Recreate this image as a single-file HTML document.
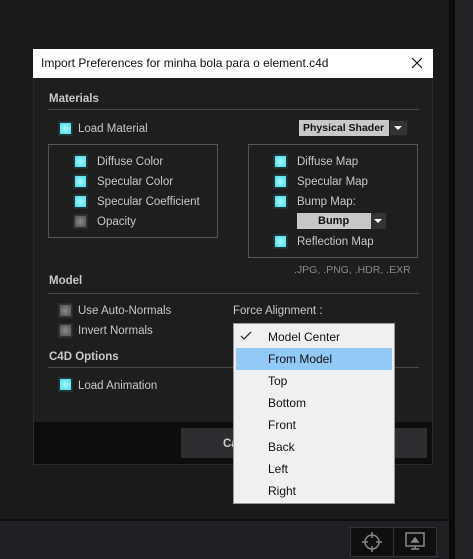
<!DOCTYPE html>
<html><head><style>
*{margin:0;padding:0;box-sizing:border-box}
body{width:473px;height:559px;background:#1a1a1b;position:relative;overflow:hidden;font-family:"Liberation Sans",sans-serif;font-size:11.5px;color:#c8c8c8}
.a{position:absolute}
.t{position:absolute;white-space:nowrap;line-height:14px}
.cb{position:absolute;width:13px;height:13px;border:1px solid #1a3c44;background:radial-gradient(#a6fbff,#48d8ec);box-shadow:0 0 0 1px #2b2b2b}
.cb.off{background:radial-gradient(#8a8a8a,#505050);border-color:#333}
.h{font-weight:bold;color:#c8c8c8;font-size:11.5px}
.ln{position:absolute;height:1px;background:#4a4a4a}
.mi{position:absolute;left:268px;color:#111;font-size:12px;line-height:14px}
</style></head><body>
<div class="a" style="left:449px;top:0;width:6px;height:559px;background:#0a0a0a"></div>
<div class="a" style="left:455px;top:0;width:18px;height:559px;background:#222326"></div>
<div class="a" style="left:0;top:519px;width:449px;height:40px;background:#1f2023;border-top:2px solid #0e0e0e"></div>
<div class="a" style="left:350px;top:527px;width:44px;height:30px;background:#0f0f10;border:1px solid #333"></div>
<div class="a" style="left:393px;top:527px;width:44px;height:30px;background:#0f0f10;border:1px solid #333"></div>
<svg class="a" style="left:360px;top:530px" width="24" height="24" viewBox="0 0 24 24" fill="none" stroke="#888" stroke-width="1.5"><circle cx="12" cy="12" r="7"/><path d="M12 2v6M12 16v6M2 12h6M16 12h6"/></svg>
<svg class="a" style="left:403px;top:531px" width="24" height="22" viewBox="0 0 24 22" fill="none" stroke="#888" stroke-width="1.5"><rect x="3" y="2" width="18" height="13"/><path d="M8 18h8M12 15v3"/><path d="M9 11l3-4 3 4z" fill="#888"/></svg>

<div class="a" style="left:33px;top:49px;width:400px;height:416px;background:#1e1e1f;border:1px solid #2a2a2a"></div>
<div class="a" style="left:33px;top:49px;width:400px;height:29px;background:#fff"></div>
<div class="t" style="left:41px;top:56px;color:#111;font-size:12px">Import Preferences for minha bola para o element.c4d</div>
<svg class="a" style="left:411px;top:57px" width="12" height="12" viewBox="0 0 12 12" stroke="#111" stroke-width="1.2"><path d="M1 1l10 10M11 1L1 11"/></svg>
<div class="a" style="left:34px;top:422px;width:398px;height:42px;background:#0c0d0d"></div>
<div class="a" style="left:181px;top:428px;width:246px;height:30px;background:#2c2d30"></div>
<div class="t" style="left:223px;top:437px;color:#ccc;font-weight:bold">Ca</div>

<div class="t h" style="left:49px;top:92px">Materials</div>
<div class="ln" style="left:48px;top:109px;width:371px"></div>
<div class="cb" style="left:59px;top:122px"></div><div class="t" style="left:78px;top:122px">Load Material</div>
<div class="a" style="left:299px;top:120px;width:109px;height:16px;background:#c8c8c8"></div>
<div class="t" style="left:303px;top:121px;color:#111;font-weight:bold;font-size:10.5px">Physical Shader</div>
<div class="a" style="left:389px;top:120px;width:19px;height:16px;background:#333;border:1px solid #222"></div>
<div class="a" style="left:394px;top:126px;border-left:4px solid transparent;border-right:4px solid transparent;border-top:4px solid #fff"></div>

<div class="a" style="left:48px;top:144px;width:170px;height:94px;border:1px solid #555"></div>
<div class="cb" style="left:74px;top:155px"></div><div class="t" style="left:97px;top:155px">Diffuse Color</div>
<div class="cb" style="left:74px;top:175px"></div><div class="t" style="left:97px;top:175px">Specular Color</div>
<div class="cb" style="left:74px;top:195px"></div><div class="t" style="left:97px;top:195px">Specular Coefficient</div>
<div class="cb off" style="left:74px;top:215px"></div><div class="t" style="left:97px;top:215px">Opacity</div>

<div class="a" style="left:248px;top:144px;width:170px;height:114px;border:1px solid #555"></div>
<div class="cb" style="left:274px;top:155px"></div><div class="t" style="left:297px;top:155px">Diffuse Map</div>
<div class="cb" style="left:274px;top:175px"></div><div class="t" style="left:297px;top:175px">Specular Map</div>
<div class="cb" style="left:274px;top:195px"></div><div class="t" style="left:297px;top:195px">Bump Map:</div>
<div class="a" style="left:297px;top:213px;width:89px;height:16px;background:#c8c8c8"></div>
<div class="t" style="left:318px;top:214px;color:#111;font-weight:bold;font-size:11px">Bump</div>
<div class="a" style="left:371px;top:213px;width:15px;height:16px;background:#333"></div>
<div class="a" style="left:374px;top:219px;border-left:4px solid transparent;border-right:4px solid transparent;border-top:4px solid #fff"></div>
<div class="cb" style="left:274px;top:235px"></div><div class="t" style="left:297px;top:235px">Reflection Map</div>
<div class="t" style="left:294px;top:263px;color:#888;font-size:10.5px">.JPG, .PNG, .HDR, .EXR</div>

<div class="t h" style="left:49px;top:274px">Model</div>
<div class="ln" style="left:48px;top:293px;width:371px"></div>
<div class="cb off" style="left:59px;top:304px"></div><div class="t" style="left:78px;top:304px">Use Auto-Normals</div>
<div class="cb off" style="left:59px;top:324px"></div><div class="t" style="left:78px;top:324px">Invert Normals</div>
<div class="t" style="left:233px;top:304px">Force Alignment :</div>
<div class="t h" style="left:49px;top:350px">C4D Options</div>
<div class="ln" style="left:48px;top:367px;width:371px"></div>
<div class="cb" style="left:59px;top:378px"></div><div class="t" style="left:78px;top:379px">Load Animation</div>

<div class="a" style="left:233px;top:323px;width:162px;height:181px;background:#f0f0f0;border:1px solid #999"></div>
<div class="a" style="left:236px;top:348px;width:156px;height:22px;background:#91c9f7"></div>
<svg class="a" style="left:240px;top:331px" width="12" height="10" viewBox="0 0 12 10" fill="none" stroke="#333" stroke-width="1.3"><path d="M1 5l3 3 7-7"/></svg>
<div class="mi" style="top:330px">Model Center</div>
<div class="mi" style="top:352px">From Model</div>
<div class="mi" style="top:374px">Top</div>
<div class="mi" style="top:396px">Bottom</div>
<div class="mi" style="top:418px">Front</div>
<div class="mi" style="top:440px">Back</div>
<div class="mi" style="top:462px">Left</div>
<div class="mi" style="top:484px">Right</div>
</body></html>
